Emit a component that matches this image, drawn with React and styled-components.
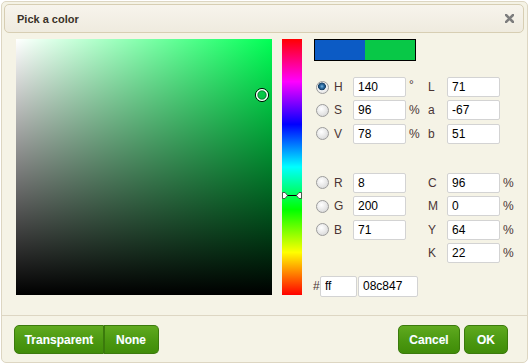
import React from 'react';
import styled, { createGlobalStyle } from 'styled-components';

const Global = createGlobalStyle`
  html, body { margin: 0; padding: 0; background: #fff; }
  body { font-family: "Liberation Sans", Arial, sans-serif; }
`;

const Dialog = styled.div`
  box-sizing: border-box;
  margin: 1px 0 0 1px;
  width: 527px;
  height: 362px;
  border: 1px solid #ddd6c2;
  border-radius: 5px;
  background: #f5f3e6;
  padding: 2px 3px 0 2px;
  display: flex;
  flex-direction: column;
`;

const TitleBar = styled.div`
  box-sizing: border-box;
  height: 29px;
  border: 1px solid #d7ceb3;
  border-radius: 5px;
  background: linear-gradient(#f7f4ec, #efebdf);
  display: flex;
  align-items: center;
  justify-content: space-between;
  padding: 0 9px 0 12px;
`;

const Title = styled.span`
  font-size: 11px;
  font-weight: bold;
  color: #3a3328;
`;

const Body = styled.div`
  display: flex;
  align-items: flex-start;
  height: 282px;
  padding: 6px 0 0 12px;
  box-sizing: border-box;
`;

const Map = styled.div`
  position: relative;
  width: 256px;
  height: 256px;
  flex: none;
  background: linear-gradient(to top, #000, rgba(0, 0, 0, 0)),
    linear-gradient(to right, #fff, hsl(140, 100%, 50%));
`;

const HueBar = styled.div`
  position: relative;
  margin-left: 10px;
  width: 20px;
  height: 256px;
  flex: none;
  background: linear-gradient(#f00, #f0f, #00f, #0ff, #0f0, #ff0, #f00);
`;

const Marker = styled.svg`
  position: absolute;
  left: ${(p) => p.$x}px;
  top: ${(p) => p.$y}px;
  overflow: visible;
`;

const Panel = styled.div`
  margin-left: 12px;
  display: flex;
  flex-direction: column;
`;

const Swatch = styled.div`
  display: flex;
  width: 102px;
  height: 22px;
  box-sizing: border-box;
  border: 1px solid #000;
`;

const SwatchHalf = styled.div`
  flex: 1;
  background: ${(p) => p.$c};
`;

const FieldGrid = styled.div`
  display: grid;
  grid-template-columns: 19px 20px 53px 22px 19px 53px 14px;
  grid-auto-rows: 20px;
  row-gap: 3.4px;
  align-items: center;
  margin-top: ${(p) => p.$mt}px;
`;

const Radio = styled.span`
  box-sizing: border-box;
  width: 13px;
  height: 13px;
  margin-left: 2px;
  border-radius: 50%;
  border: 1px solid #9c9c9c;
  background: ${(p) =>
    p.$on
      ? 'radial-gradient(circle at 45% 40%, #7fb6e0 0, #2c6fa6 1.8px, #163e63 3.6px, #f4f4f4 4.2px, #d8d8d8 100%)'
      : 'radial-gradient(circle at 40% 35%, #ffffff, #e6e6e6 55%, #cfcfcf)'};
`;

const Label = styled.span`
  font-size: 12px;
  color: #4a3535;
  padding-left: ${(p) => p.$pl || 0}px;
  width: ${(p) => (p.$w ? `${p.$w}px` : 'auto')};
  flex: none;
`;

const Unit = styled.span`
  font-size: 12px;
  color: #4a3535;
  padding-left: 3px;
  align-self: ${(p) => (p.$sup ? 'start' : 'center')};
  margin-top: ${(p) => (p.$sup ? 1 : 0)}px;
`;

const Input = styled.input`
  box-sizing: border-box;
  width: ${(p) => p.$w || 53}px;
  height: ${(p) => p.$h || 20}px;
  border: 1px solid #d3d3d3;
  border-radius: 2px;
  background: #fff;
  padding: 0 4px;
  margin: 0;
  font-family: "Liberation Sans", Arial, sans-serif;
  font-size: 12px;
  color: #000;
  outline: none;
`;

const HexRow = styled.div`
  display: flex;
  align-items: center;
  gap: 1px;
  margin-top: 13px;
  margin-left: -1px;
`;

const Footer = styled.div`
  margin: 0 -3px 0 -2px;
  border-top: 1px solid #ddd6c3;
  padding: 9px 19px 0 12px;
  display: flex;
  justify-content: space-between;
`;

const Group = styled.div`
  display: flex;
  gap: ${(p) => p.$gap || 0}px;
`;

const Button = styled.button`
  box-sizing: border-box;
  height: 29px;
  width: ${(p) => p.$w}px;
  margin: 0;
  padding: 0;
  border: 1px solid #3b7a0c;
  border-radius: 5px;
  background: linear-gradient(#60aa1f, #4b9811 55%, #408c08);
  color: #fff;
  font-family: "Liberation Sans", Arial, sans-serif;
  font-size: 12px;
  font-weight: bold;
  text-shadow: -0.5px 0 0 rgba(120, 220, 255, 0.35);
  cursor: pointer;
`;

const JoinedButton = styled(Button)`
  border-radius: ${(p) => (p.$first ? '5px 0 0 5px' : '0 5px 5px 0')};
  border-left-width: ${(p) => (p.$first ? 1 : 0)}px;
  box-shadow: ${(p) => (p.$first ? 'none' : 'inset 1px 0 0 #3b7a0c')};
`;

const leftRows = [
  { r: 'H', v: '140', u: '°', sup: true, on: true, l2: 'L', v2: '71', u2: '' },
  { r: 'S', v: '96', u: '%', l2: 'a', v2: '-67', u2: '' },
  { r: 'V', v: '78', u: '%', l2: 'b', v2: '51', u2: '' },
];

const rgbRows = [
  { r: 'R', v: '8', l2: 'C', v2: '96', u2: '%' },
  { r: 'G', v: '200', l2: 'M', v2: '0', u2: '%' },
  { r: 'B', v: '71', l2: 'Y', v2: '64', u2: '%' },
  { l2: 'K', v2: '22', u2: '%' },
];

function Rows({ rows }) {
  return rows.map((row, i) => (
    <React.Fragment key={i}>
      {row.r ? <Radio $on={row.on} /> : <span />}
      <Label $pl={1}>{row.r || ''}</Label>
      {row.r ? <Input defaultValue={row.v} /> : <span />}
      <Unit $sup={row.sup}>{row.u || ''}</Unit>
      <Label>{row.l2}</Label>
      <Input defaultValue={row.v2} />
      <Unit>{row.u2}</Unit>
    </React.Fragment>
  ));
}

export default function App() {
  return (
    <>
      <Global />
      <Dialog>
        <TitleBar>
          <Title>Pick a color</Title>
          <svg width="9" height="9" viewBox="0 0 9 9">
            <path d="M1 1 L8 8 M8 1 L1 8" stroke="#7d7d7d" strokeWidth="2.6" strokeLinecap="square" />
          </svg>
        </TitleBar>
        <Body>
          <Map>
            <Marker $x={238} $y={48} width="16" height="16" viewBox="0 0 16 16">
              <circle cx="8" cy="8" r="6.5" fill="none" stroke="#000" strokeWidth="1" />
              <circle cx="8" cy="8" r="5.3" fill="none" stroke="#fff" strokeWidth="1.6" />
              <circle cx="8" cy="8" r="4.2" fill="none" stroke="rgba(0,0,0,0.45)" strokeWidth="0.8" />
            </Marker>
          </Map>
          <HueBar>
            <Marker $x={0} $y={152} width="20" height="9" viewBox="0 0 20 9">
              <line x1="4" y1="4.5" x2="16" y2="4.5" stroke="#000" strokeWidth="1" />
              <polygon points="0.5,1.5 3,1.5 5.5,4.5 3,7.5 0.5,7.5" fill="#fff" stroke="#333" strokeWidth="0.8" />
              <polygon points="19.5,1.5 17,1.5 14.5,4.5 17,7.5 19.5,7.5" fill="#fff" stroke="#333" strokeWidth="0.8" />
            </Marker>
          </HueBar>
          <Panel>
            <Swatch>
              <SwatchHalf $c="#0c5bc5" />
              <SwatchHalf $c="#08c847" />
            </Swatch>
            <FieldGrid $mt={16}>
              <Rows rows={leftRows} />
            </FieldGrid>
            <FieldGrid $mt={29}>
              <Rows rows={rgbRows} />
            </FieldGrid>
            <HexRow>
              <Label $w={6}>#</Label>
              <Input $w={37} $h={21} defaultValue="ff" />
              <Input $w={60} $h={21} defaultValue="08c847" />
            </HexRow>
          </Panel>
        </Body>
        <Footer>
          <Group>
            <JoinedButton $first $w={90}>Transparent</JoinedButton>
            <JoinedButton $w={55}>None</JoinedButton>
          </Group>
          <Group $gap={4}>
            <Button $w={62}>Cancel</Button>
            <Button $w={44}>OK</Button>
          </Group>
        </Footer>
      </Dialog>
    </>
  );
}
